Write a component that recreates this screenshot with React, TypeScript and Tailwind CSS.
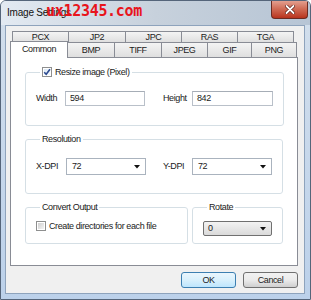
import React from "react";

const font = "font-['Liberation_Sans',Arial,sans-serif] text-[9px] tracking-[-0.4px] text-[#1b1b1b]";

function Arrow() {
  return (
    <svg width="6" height="4" viewBox="0 0 6 4" className="shrink-0">
      <path d="M0 0 H6 L3 3.5 Z" fill="#111" />
    </svg>
  );
}

function Combo({ value, w }: { value: string; w: string }) {
  return (
    <div className={`${w} h-[17px] border border-[#aab3be] bg-white flex items-center justify-between pl-[5px] pr-[5px]`}>
      <span className="leading-none">{value}</span>
      <Arrow />
    </div>
  );
}

function TextBox({ value, w }: { value: string; w: string }) {
  return (
    <div className={`${w} h-[15px] border border-[#b9c0c9] border-t-[#a6adb6] bg-white flex items-center pl-[4px]`}>
      <span className="leading-none">{value}</span>
    </div>
  );
}

function CheckBox({ checked }: { checked: boolean }) {
  return (
    <div className="w-[10px] h-[10px] border border-[#8e8f8f] bg-white p-[1px] shrink-0">
      <div className={`w-full h-full ${checked ? "bg-gradient-to-br from-[#dbe8f4] to-[#f5f9fd]" : "bg-gradient-to-br from-[#cfcfcf] to-[#f4f4f4]"} relative`}>
        {checked && (
          <svg width="8" height="8" viewBox="0 0 8 8" className="absolute -left-[1px] -top-[1px]">
            <path d="M1.2 4.2 L3.2 6.3 L7 1.2" stroke="#2c4a8f" strokeWidth="1.6" fill="none" />
          </svg>
        )}
      </div>
    </div>
  );
}

const tabBase = "flex items-center justify-center border border-[#898c95] bg-gradient-to-b from-[#f4f4f4] to-[#dfdfdf] leading-none";

export default function App() {
  const row1 = [
    ["PCX", "w-[57px]"],
    ["JP2", "w-[58px]"],
    ["JPC", "w-[57px]"],
    ["RAS", "w-[57px]"],
    ["TGA", "w-[57px]"],
  ];
  const row2 = [
    ["BMP", "w-[48px]"],
    ["TIFF", "w-[48px]"],
    ["JPEG", "w-[47px]"],
    ["GIF", "w-[45px]"],
    ["PNG", "w-[46px]"],
  ];
  return (
    <div className={`relative w-[311px] h-[300px] overflow-hidden rounded-t-[6px] border border-[#55657a] bg-gradient-to-b from-[#d3dfec] to-[#bcd1ea] flex flex-col pl-[4px] pr-[5px] pb-[5px] ${font}`}>
      {/* title bar */}
      <div className="h-[24px] shrink-0 flex items-start bg-gradient-to-r from-[#e3eaf2] via-[#c7d1dc] to-[#b7c5d5] -mx-[4px] -mr-[5px] pl-[6px]">
        <span className="mt-[6px] text-[10px] tracking-[-0.2px] text-[#111] leading-[12px]">Image Settings</span>
        <div className="ml-auto -mt-[1px] mr-[2px] w-[37px] h-[19px] rounded-b-[4px] border border-[#6b2b22] border-t-0 bg-gradient-to-b from-[#e5a596] via-[#cf6a54] to-[#b8321c] flex items-center justify-center">
          <svg width="10" height="9" viewBox="0 0 10 9">
            <path d="M1.5 1 L8.5 8 M8.5 1 L1.5 8" stroke="#5a1a12" strokeWidth="3.2" strokeLinecap="round" />
            <path d="M1.5 1 L8.5 8 M8.5 1 L1.5 8" stroke="#fff" strokeWidth="1.8" strokeLinecap="round" />
          </svg>
        </div>
      </div>
      <div className="absolute left-[45px] top-[1px] font-['DejaVu_Sans_Mono',monospace] font-bold text-[15px] tracking-[-0.3px] text-[#e8141c] leading-[18px]">
        ux12345.com
      </div>

      {/* client */}
      <div className="flex-1 bg-[#f0f0f0] border border-[#8ea3bc] flex flex-col pl-[4px] pr-[5px] pt-[5px]">
        {/* tabs */}
        <div className="w-[288px] flex flex-col">
          <div className="flex pl-[2px] h-[11px]">
            {row1.map(([t, w], i) => (
              <div key={t} className={`${tabBase} ${w} h-[11px] border-b-0 ${i > 0 ? "-ml-px" : ""}`}>{t}</div>
            ))}
          </div>
          <div className="flex items-end h-[15px] relative z-10">
            <div className="w-[58px] h-[17px] -mb-px border border-[#898c95] border-b-0 bg-white flex items-center justify-center leading-none pb-[1px]">Common</div>
            {row2.map(([t, w]) => (
              <div key={t} className={`${tabBase} ${w} h-[15px] border-b-0 -ml-px`}>{t}</div>
            ))}
          </div>
        </div>
        {/* panel */}
        <div className="w-[288px] h-[209px] border border-[#898c95] bg-white flex flex-col px-[14px] pt-[9px]">
          <fieldset className="h-[59px] border border-[#d5dfe5] rounded-[3px] px-[10px]">
            <legend className="ml-[4px] px-[2px] flex items-center gap-[3px] leading-[10px]">
              <CheckBox checked />
              <span>Resize image (Pixel)</span>
            </legend>
            <div className="mt-[14px] flex items-center h-[15px]">
              <span className="w-[29px]">Width</span>
              <TextBox value="594" w="w-[80px]" />
              <span className="w-[29px] ml-[18px]">Height</span>
              <TextBox value="842" w="w-[81px]" />
            </div>
          </fieldset>
          <fieldset className="mt-[8px] h-[60px] border border-[#d5dfe5] rounded-[3px] px-[10px]">
            <legend className="ml-[4px] px-[2px] leading-[10px]">Resolution</legend>
            <div className="mt-[14px] flex items-center h-[17px]">
              <span className="w-[30px]">X-DPI</span>
              <Combo value="72" w="w-[80px]" />
              <span className="w-[29px] ml-[17px]">Y-DPI</span>
              <Combo value="72" w="w-[80px]" />
            </div>
          </fieldset>
          <div className="mt-[8px] flex gap-[4px]">
            <fieldset className="w-[168px] h-[42px] border border-[#d5dfe5] rounded-[3px] px-[10px]">
              <legend className="ml-[4px] px-[2px] leading-[10px]">Convert Output</legend>
              <div className="mt-[9px] flex items-center gap-[3px]">
                <CheckBox checked={false} />
                <span className="leading-[10px]">Create directories for each file</span>
              </div>
            </fieldset>
            <fieldset className="flex-1 h-[42px] border border-[#d5dfe5] rounded-[3px] px-[10px]">
              <legend className="ml-[4px] px-[2px] leading-[10px]">Rotate</legend>
              <div className="mt-[9px] w-[69px] h-[15px] rounded-[2px] border border-[#707070] bg-gradient-to-b from-[#f3f3f3] to-[#dadada] flex items-center justify-between pl-[4px] pr-[5px]">
                <span className="leading-none">0</span>
                <Arrow />
              </div>
            </fieldset>
          </div>
        </div>
        {/* buttons */}
        <div className="mt-[6px] flex justify-end gap-[7px] pr-px">
          <div className="w-[55px] h-[16px] rounded-[3px] border border-[#3c7fb1] bg-gradient-to-b from-[#eaf6fd] via-[#d9f0fc] to-[#bee6fd] flex items-center justify-center leading-none">OK</div>
          <div className="w-[55px] h-[16px] rounded-[3px] border border-[#707070] bg-gradient-to-b from-[#f2f2f2] via-[#ebebeb] to-[#cfcfcf] flex items-center justify-center leading-none">Cancel</div>
        </div>
      </div>
    </div>
  );
}
